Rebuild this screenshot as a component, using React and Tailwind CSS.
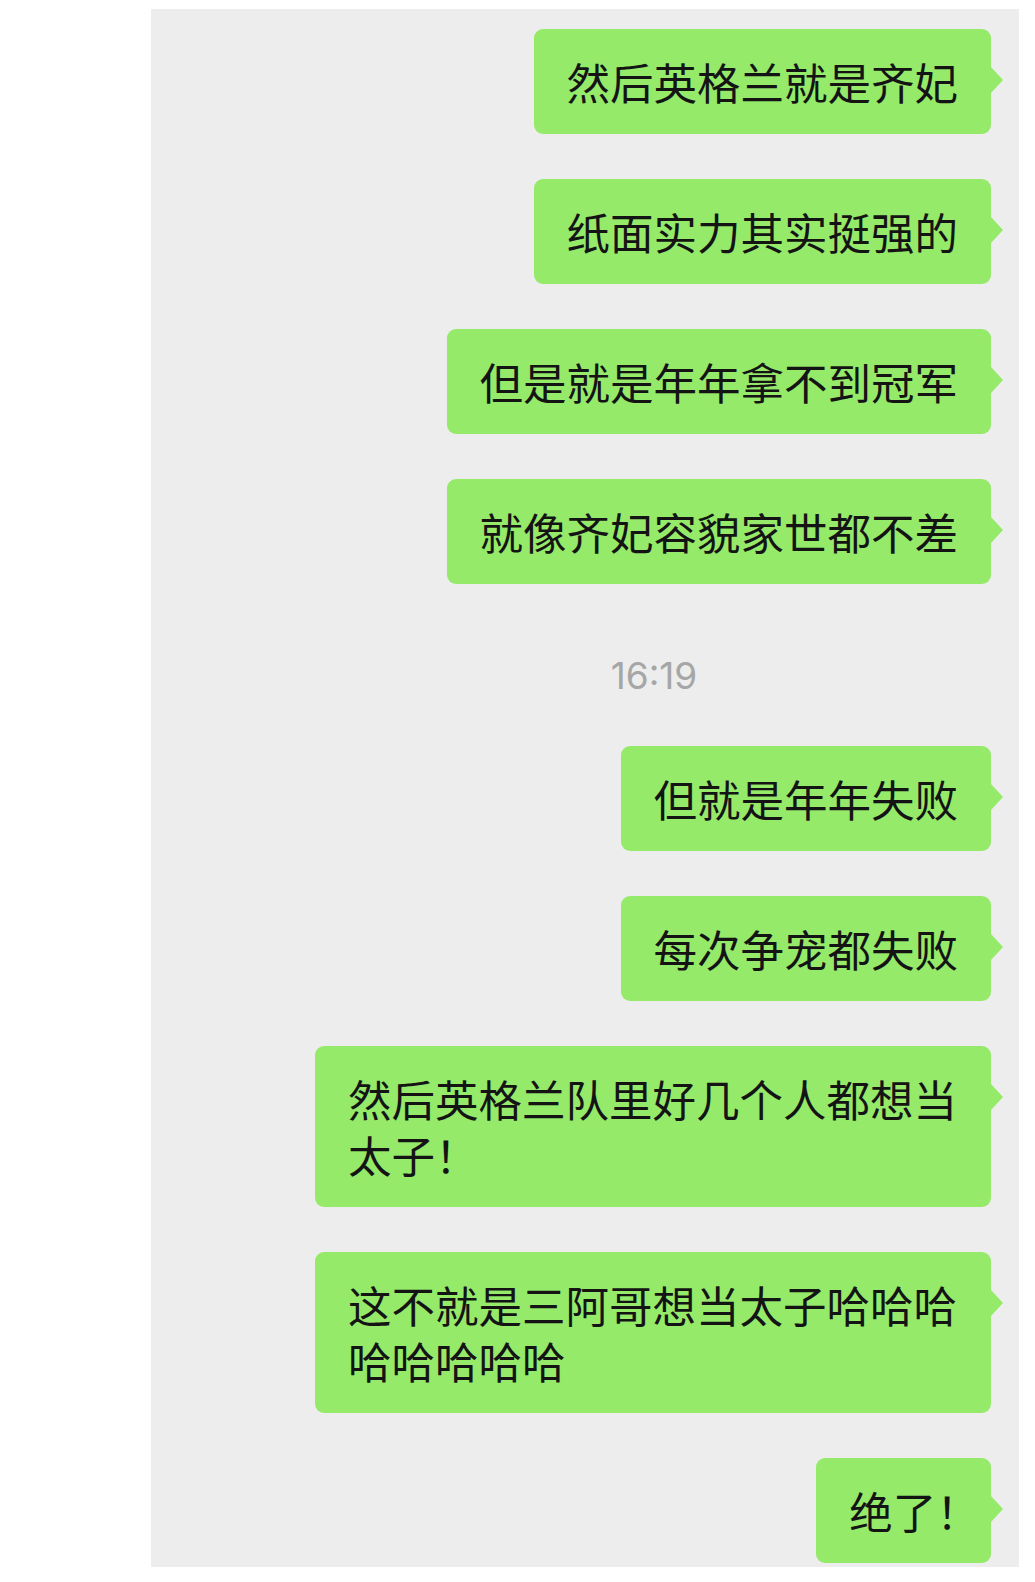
import React from "react";

const messages = [
  { text: "然后英格兰就是齐妃" },
  { text: "纸面实力其实挺强的" },
  { text: "但是就是年年拿不到冠军" },
  { text: "就像齐妃容貌家世都不差" },
  { time: "16:19" },
  { text: "但就是年年失败" },
  { text: "每次争宠都失败" },
  { text: "然后英格兰队里好几个人都想当太子！" },
  { text: "这不就是三阿哥想当太子哈哈哈哈哈哈哈哈" },
  { text: "绝了！" },
];

function Bubble({ text }) {
  return (
    <div className="relative max-w-[676px] rounded-[9px] bg-[#95ea6a] pl-[33px] pr-[33px] pt-[25px] pb-[24px] text-[43.5px] leading-[56px] text-[#141414] [font-feature-settings:'palt']">
      {text}
      <span className="absolute left-full top-[38px] h-0 w-0 border-y-[13px] border-l-[12px] border-y-transparent border-l-[#95ea6a]" />
    </div>
  );
}

export default function App() {
  return (
    <div
      className="min-h-[1582px] w-[1035px] bg-white pt-[9px] pb-[15px]"
      style={{ fontFamily: '"Noto Sans CJK SC", "Noto Sans", sans-serif' }}
    >
      <div className="ml-[151px] flex h-[1558px] w-[868px] flex-col items-end bg-[#ededed] pt-[20px] pr-[28px]">
        {messages.map((m, i) =>
          m.time ? (
            <div
              key={i}
              className="mt-[72px] mb-[50px] w-full pl-[166px] text-center text-[37px] leading-[40px] text-[#a6a6a6]"
              style={{ fontFamily: 'Inter, "Liberation Sans", sans-serif' }}
            >
              {m.time}
            </div>
          ) : (
            <div key={i} className={i === 0 || messages[i - 1].time ? "" : "mt-[45px]"}>
              <Bubble text={m.text} />
            </div>
          )
        )}
      </div>
    </div>
  );
}
